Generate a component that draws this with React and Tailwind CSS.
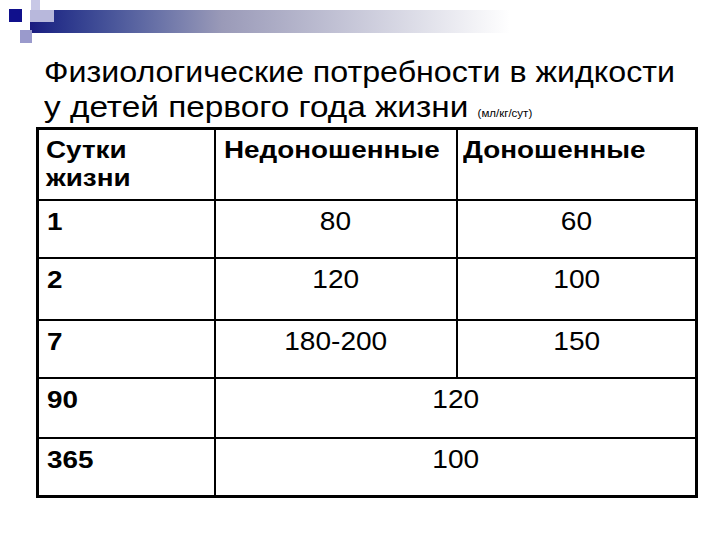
const rows = [
  { day: "1", pre: "80", full: "60", h: "h-[58px]" },
  { day: "2", pre: "120", full: "100", h: "h-[62px]" },
  { day: "7", pre: "180-200", full: "150", h: "h-[58px]" },
]

const merged = [
  { day: "90", value: "120", h: "h-[60px]" },
  { day: "365", value: "100", h: "h-[59px]" },
]

const Decoration = () => (
  <div className="relative h-[46px] w-full">
    <div className="absolute left-[30px] top-[10px] h-[23px] w-[480px] bg-gradient-to-r from-[#1a1a80] via-[#9a9ab8] via-40% to-white" />
    <div className="absolute left-[31px] top-0 h-[10px] w-[9px] bg-[#c8c8e6]" />
    <div className="absolute left-[30px] top-[10px] h-[12px] w-[24px] bg-[#b8b8dc]" />
    <div className="absolute left-[9px] top-[9px] h-[13px] w-[13px] bg-[#10108c]" />
    <div className="absolute left-[20px] top-[30px] h-[13px] w-[12px] bg-[#9a9acc]" />
  </div>
)

// the slide is a bit stretched sideways, so the glyphs get a horizontal scale
const Wide = ({ children, left }) => (
  <span className={`inline-block scale-x-[1.16] ${left ? "origin-left" : "origin-center"}`}>{children}</span>
)

const Num = ({ children }) => (
  <span className="inline-block scale-x-[1.08] text-[26px]">{children}</span>
)

export default function App() {
  return (
    <div className="w-[720px] h-[540px] bg-white text-black font-['Liberation_Sans',Arial,sans-serif] overflow-hidden">
      <Decoration />
      <div className="pl-[44px] pt-[9px] text-[29px] leading-[35px] whitespace-nowrap">
        <div className="origin-left scale-x-[1.11]">Физиологические потребности в жидкости</div>
        <div className="origin-left scale-x-[1.15]">
          у детей первого года жизни{" "}
          <span className="text-[10px]">(мл/кг/сут)</span>
        </div>
      </div>
      <table className="ml-[36px] -mt-[4px] w-[662px] border-collapse border-[3px] border-black text-[24px] leading-[28px]">
        <colgroup>
          <col className="w-[177px]" />
          <col className="w-[242px]" />
          <col />
        </colgroup>
        <tbody>
          <tr className="h-[71px] align-top font-bold">
            <td className="border-2 border-black px-[7px] pt-[6px]">
              <Wide left>Сутки</Wide>
              <br />
              <Wide left>жизни</Wide>
            </td>
            <td className="border-2 border-black px-[8px] pt-[6px]"><Wide left>Недоношенные</Wide></td>
            <td className="border-2 border-black px-[5px] pt-[6px]"><Wide left>Доношенные</Wide></td>
          </tr>
          {rows.map((r) => (
            <tr key={r.day} className={`${r.h} align-top`}>
              <td className="border-2 border-black px-[8px] pt-[7px] font-bold"><Wide left>{r.day}</Wide></td>
              <td className="border-2 border-black pt-[6px] text-center"><Num>{r.pre}</Num></td>
              <td className="border-2 border-black pt-[6px] text-center"><Num>{r.full}</Num></td>
            </tr>
          ))}
          {merged.map((r) => (
            <tr key={r.day} className={`${r.h} align-top`}>
              <td className="border-2 border-black px-[8px] pt-[7px] font-bold"><Wide left>{r.day}</Wide></td>
              <td colSpan={2} className="border-2 border-black pt-[6px] text-center"><Num>{r.value}</Num></td>
            </tr>
          ))}
        </tbody>
      </table>
    </div>
  )
}
